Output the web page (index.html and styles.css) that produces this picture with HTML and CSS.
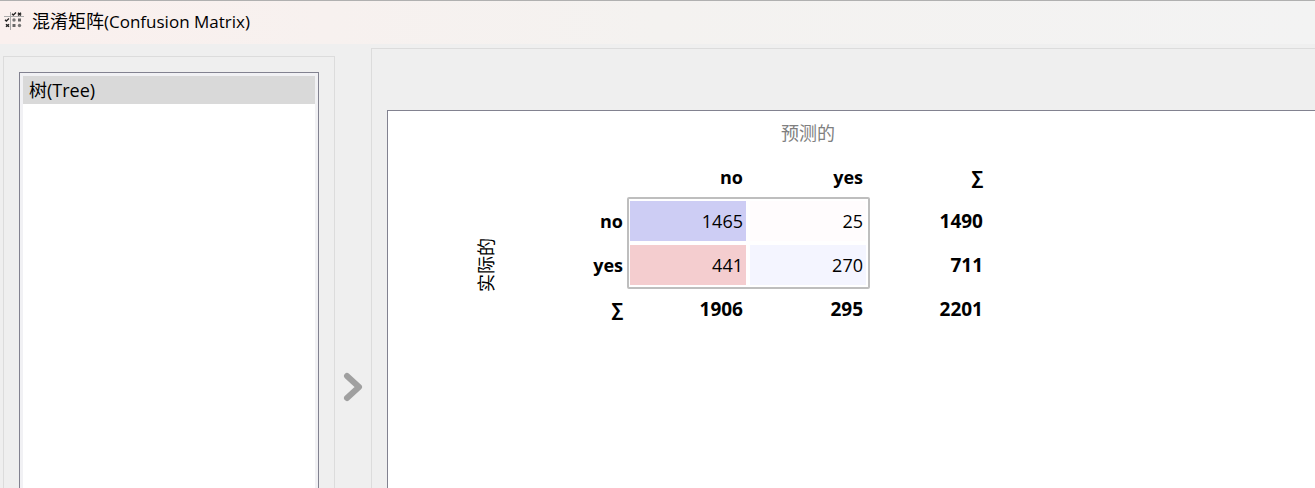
FILE: index.html
```html
<!DOCTYPE html>
<html lang="zh-CN">
<head>
<meta charset="utf-8">
<title>混淆矩阵(Confusion Matrix)</title>
<link rel="stylesheet" href="styles.css">
</head>
<body>
<header class="titlebar">
  <svg class="logo" viewBox="0 0 20 20" aria-hidden="true">
    <path d="M6.500 0v18M0 4.500h20" stroke="#aaa" fill="none"/>
    <path d="M8 1.800l1.300 1.200L12 .5M1 7.800l1.300 1.200L5 6.500" stroke="#222" stroke-width="1.300" fill="none"/>
    <path d="M14 .8l3 2.600m0-2.600l-3 2.600M2 12.200l3 2.600m0-2.600l-3 2.600" stroke="#222" stroke-width="1.500"/>
    <path d="M14 6.500h3v3h-3zM8.500 12h3v3h-3z" fill="#666"/>
    <circle cx="10" cy="8" r="1.700" fill="#777"/>
    <circle cx="15.500" cy="13.500" r="1.700" fill="#777"/>
  </svg>
  <h1 class="title">混淆矩阵<span class="latin">(Confusion Matrix)</span></h1>
</header>
<main class="workspace">
  <section class="learners">
    <ul class="list">
      <li class="item">树(Tree)</li>
    </ul>
  </section>
  <button class="toggle" type="button" aria-label="展开">
    <svg class="chevron" viewBox="0 0 20 30" aria-hidden="true"><path d="M4 4l12 11L4 26" fill="none" stroke="#a0a0a0" stroke-width="6" stroke-linecap="round" stroke-linejoin="round"/></svg>
  </button>
  <section class="result">
    <div class="view">
      <table class="matrix">
        <colgroup><col class="col-axis"><col><col><col><col></colgroup>
        <thead>
          <tr><td colspan="2"></td><th class="predicted" colspan="3">预测的</th></tr>
          <tr><td colspan="2"></td><th scope="col">no</th><th scope="col">yes</th><th scope="col">∑</th></tr>
        </thead>
        <tbody>
          <tr><th class="actual" rowspan="3"><span class="vertical">实际的</span></th><th scope="row">no</th><td class="cell framed hit">1465</td><td class="cell faint-miss">25</td><td class="total">1490</td></tr>
          <tr><th scope="row">yes</th><td class="cell miss">441</td><td class="cell faint-hit">270</td><td class="total">711</td></tr>
          <tr><th scope="row">∑</th><td class="total">1906</td><td class="total">295</td><td class="total">2201</td></tr>
        </tbody>
      </table>
    </div>
  </section>
</main>
</body>
</html>
```
FILE: styles.css
```css
* {
  box-sizing: border-box;
}

body {
  margin: 0;
  height: 100vh;
  display: flex;
  flex-direction: column;
  overflow: hidden;
  background: #efefef;
  color: #000;
  font-family: "Open Sans", "Noto Sans CJK SC", sans-serif;
  font-size: 18px;
  line-height: 28px;
}

.titlebar {
  display: flex;
  align-items: center;
  gap: 8px;
  height: 44px;
  padding: 0 4px 2px;
  border-top: 1px solid #b0b0b0;
  background: linear-gradient(90deg, #faf0ee, #f4f2f0 50%, #f3f3f3);
}

.logo {
  width: 20px;
  height: 20px;
}

.title {
  margin: 0;
  font-size: 18px;
  font-weight: 400;
}

.latin {
  font-size: 17px;
}

.workspace {
  flex: 1;
  display: flex;
  min-height: 0;
  padding-left: 3px;
}

.learners {
  flex: none;
  width: 332px;
  margin-top: 12px;
  padding: 15px 15px 0;
  border: 1px solid #dcdcdc;
  border-bottom: 0;
}

.list {
  height: 100%;
  margin: 0;
  border: 1px solid #828290;
  border-bottom: 0;
  padding: 3px 3px 0;
  background: linear-gradient(#fff, #fff) content-box, #f1f1f4;
  list-style: none;
}

.item {
  padding-left: 6px;
  background: #d9d9d9;
}

.toggle {
  flex: none;
  width: 36px;
  padding: 242px 0 0;
  border: 0;
  background: none;
}

.chevron {
  display: block;
  width: 20px;
  height: 30px;
  margin: 0 auto;
}

.result {
  flex: 1;
  margin-top: 4px;
  padding: 61px 0 0 15px;
  border: solid #dcdcdc;
  border-width: 1px 0 0 1px;
}

.view {
  height: 100%;
  border: solid #828290;
  border-width: 1px 0 0 1px;
  background: #fff;
}

.matrix {
  width: 520px;
  margin-left: 80px;
  border-collapse: separate;
  border-spacing: 0;
  table-layout: fixed;
}

.col-axis {
  width: 40px;
}

.matrix th,
.matrix td {
  height: 44px;
  padding: 0 5px;
  text-align: right;
}

.matrix .total {
  font-size: 19px;
  font-weight: 700;
}

.matrix .predicted {
  text-align: center;
  color: #808080;
  font-weight: 400;
}

.matrix .actual {
  padding: 0 4px 0 0;
  text-align: center;
  font-weight: 400;
}

.vertical {
  display: inline-block;
  vertical-align: middle;
  writing-mode: vertical-rl;
  text-orientation: sideways;
  transform: rotate(180deg);
}

.matrix .cell {
  padding: 0 3px;
  border: 2px solid transparent;
  background-clip: padding-box;
}

.hit {
  background-color: #cdcdf4;
}

.miss {
  background-color: #f4cdcf;
}

.faint-hit {
  background-color: #f4f5ff;
}

.faint-miss {
  background-color: #fffcfd;
}

.framed {
  position: relative;
}

.framed::before {
  content: "";
  box-sizing: border-box;
  position: absolute;
  top: -4px;
  left: -3px;
  width: 243px;
  height: 92px;
  border: 2px solid #bebebe;
  border-radius: 2px;
}
```
